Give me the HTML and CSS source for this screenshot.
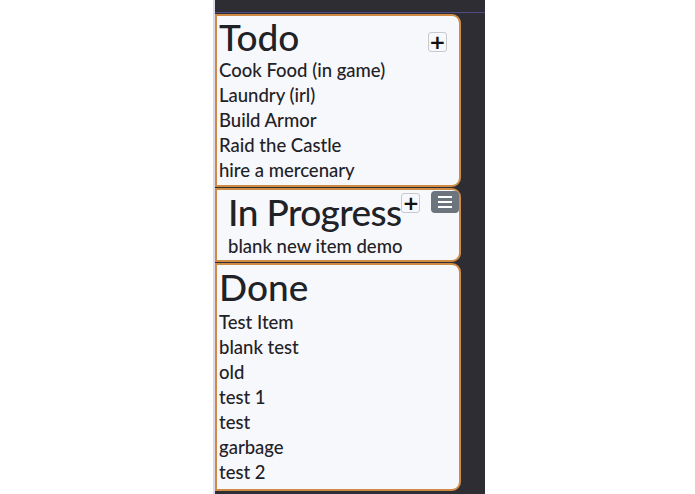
FILE: index.html
```html
<!DOCTYPE html>
<html lang="en">

<head>
    <meta charset="UTF-8">
    <meta name="viewport" content="width=device-width, initial-scale=1.0">
    <title>Board</title>
    <link rel="stylesheet" href="styles.css">
</head>

<body>
    <div class="board">
        <div class="topbar"></div>

        <!-- Todo list -->
        <div class="list list-first">
            <div class="list-header">
                <h2 class="list-title">Todo</h2>
                <button class="btn-add btn-add-right">+</button>
            </div>
            <div class="item">Cook Food (in game)</div>
            <div class="item">Laundry (irl)</div>
            <div class="item">Build Armor</div>
            <div class="item">Raid the Castle</div>
            <div class="item">hire a mercenary</div>
        </div>

        <!-- In progress list, in edit mode -->
        <div class="list list-edit">
            <div class="list-header">
                <h2 class="list-title">In Progress</h2>
                <button class="btn-add btn-add-inline">+</button>
                <button class="btn-menu">
                    <span></span><span></span><span></span>
                </button>
            </div>
            <div class="item">blank new item demo</div>
        </div>

        <!-- Done list -->
        <div class="list list-last">
            <div class="list-header">
                <h2 class="list-title">Done</h2>
            </div>
            <div class="item">Test Item</div>
            <div class="item">blank test</div>
            <div class="item">old</div>
            <div class="item">test 1</div>
            <div class="item">test</div>
            <div class="item">garbage</div>
            <div class="item">test 2</div>
        </div>
    </div>
</body>

</html>
```

FILE: styles.css
```css
* {
    box-sizing: border-box;
}

body {
    font-family: Lato, "Noto Sans", sans-serif;
    background-color: #fff;
    margin: 0;
    padding: 0;
    color: #1f2226;
}

.board {
    width: 272px;
    height: 494px;
    margin-left: 213px;
    background-color: #2f2d34;
    border-left: 2px solid #dcd8ee;
    overflow: hidden;
}

.topbar {
    height: 13px;
    border-bottom: 1px solid #4f4c86;
    margin-bottom: 1px;
}

.list {
    width: 246px;
    background-color: #f7f8fc;
    border: 2px solid #cf8a43;
    border-radius: 0 9px 9px 0;
    margin-bottom: 1px;
    padding: 0 0 0 2px;
}

.list-header {
    display: flex;
    align-items: flex-start;
    height: 44px;
}

.list-title {
    font-size: 37px;
    font-weight: 500;
    line-height: 42px;
    margin: 0;
    white-space: nowrap;
}

.item {
    font-size: 18.5px;
    font-weight: 500;
    line-height: 25px;
    white-space: nowrap;
}

.btn-add {
    flex-shrink: 0;
    width: 19px;
    height: 20px;
    padding: 0;
    background-color: #f7f8fc;
    border: 1px solid #c7c9cf;
    border-radius: 3px;
    font-family: "DejaVu Sans", sans-serif;
    font-size: 20px;
    font-weight: bold;
    line-height: 16px;
    color: #111;
}

.list-first {
    padding-bottom: 2px;
}

.list-first .list-header {
    height: 42px;
}

.btn-add-right {
    margin: 16px 12px 0 auto;
}

.list-edit {
    padding-left: 11px;
    padding-bottom: 1px;
}

.list-edit .list-title {
    line-height: 43px;
    letter-spacing: -0.6px;
}

.btn-add-inline {
    margin: 3px 0 0 0;
}

.btn-menu {
    flex-shrink: 0;
    width: 28px;
    height: 22px;
    margin: 1px 0 0 auto;
    padding: 5px 7px;
    background-color: #6c757d;
    border: none;
    border-radius: 4px;
    display: flex;
    flex-direction: column;
    justify-content: space-between;
}

.btn-menu span {
    display: block;
    height: 2px;
    width: 14px;
    background-color: #fff;
}

.list-last {
    padding-bottom: 4px;
}

.list-last .list-header {
    height: 45px;
}

.list-last .list-title {
    line-height: 44px;
}
```
